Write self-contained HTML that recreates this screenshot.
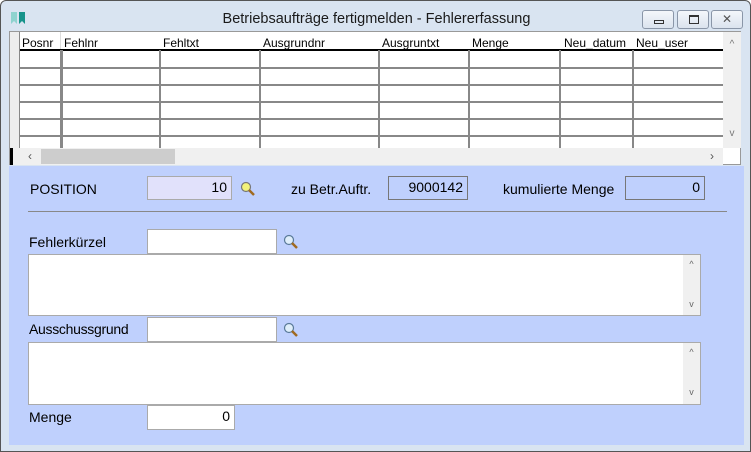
<!DOCTYPE html>
<html><head><meta charset="utf-8"><style>
*{margin:0;padding:0;box-sizing:border-box}
body{width:751px;height:452px;overflow:hidden;font-family:"Liberation Sans",Arial,sans-serif;font-size:13px;color:#000;background:#fff}
.win{position:absolute;left:0;top:0;width:751px;height:452px;background:#d9e4f1;border:1px solid #555;border-radius:6px 6px 0 0}
.abs{position:absolute}
.title{left:0;width:751px;top:10px;text-align:center;font-size:14.5px;color:#1a1a1a}
.btn{top:9px;height:19px;border:1px solid #8a96a8;border-radius:3px;background:linear-gradient(#f4f7fb,#dbe3ee)}
.grid{left:8px;top:30px;width:732px;height:134px;background:#fff;border:1px solid #999}
.hd{font-size:12px;top:4px}
.vl{width:2px;background:#888;top:18px;height:109px}
.hl{height:2px;background:#888;left:10px;width:703px}
.form{left:8px;top:165px;width:735px;height:279px;background:#bfd0fd}
.lbl{font-size:14px}
.inp{background:#fff;border:1px solid #aaa;text-align:right;font-size:14px;padding-right:4px;line-height:21px}
.ta{background:#fff;border:1px solid #aaa}
.sb{position:absolute;right:0;top:0;bottom:0;width:17px;background:#f0f0f0;font-size:9px;color:#666;text-align:center}
</style></head><body>
<div class="win">
<svg class="abs" style="left:10px;top:11px" width="16" height="14"><path d="M0 0h6v12l-3-3-3 3z" fill="#8fd3cf"/><path d="M8 0h6v12l-3-3-3 3z" fill="#17938b"/></svg>
<div class="abs title">Betriebsaufträge fertigmelden - Fehlererfassung</div>
<div class="abs btn" style="left:641px;width:32px"><div class="abs" style="left:11px;top:9px;width:10px;height:4px;border:1px solid #333"></div></div>
<div class="abs btn" style="left:676px;width:32px"><div class="abs" style="left:11px;top:4px;width:10px;height:9px;border:1px solid #333;border-top-width:2px"></div></div>
<div class="abs btn" style="left:710px;width:32px;color:#555;text-align:center;font-size:12px;line-height:17px">✕</div>
<div class="abs grid">
 <div class="abs" style="left:0;top:0;width:10px;height:116px;background:#eee;border-right:1px solid #888"></div>
 <div class="abs" style="left:0;top:116px;width:3px;height:17px;background:#000"></div>
 <div class="abs" style="left:10px;top:17px;width:703px;height:2px;background:#000"></div>
 <div class="abs hd" style="left:12px">Posnr</div><div class="abs hd" style="left:54px">Fehlnr</div><div class="abs hd" style="left:153px">Fehltxt</div><div class="abs hd" style="left:253px">Ausgrundnr</div><div class="abs hd" style="left:372px">Ausgruntxt</div><div class="abs hd" style="left:462px">Menge</div><div class="abs hd" style="left:554px">Neu_datum</div><div class="abs hd" style="left:626px">Neu_user</div>
 <div class="abs" style="left:50px;top:0;width:1px;height:17px;background:#ddd"></div>
 <div class="abs vl" style="left:50px;width:3px"></div><div class="abs vl" style="left:149px"></div><div class="abs vl" style="left:249px"></div><div class="abs vl" style="left:368px"></div><div class="abs vl" style="left:458px"></div><div class="abs vl" style="left:549px"></div><div class="abs vl" style="left:622px"></div>
 <div class="abs hl" style="top:35px"></div><div class="abs hl" style="top:52px"></div><div class="abs hl" style="top:69px"></div><div class="abs hl" style="top:86px"></div><div class="abs hl" style="top:103px"></div>
 <div class="abs" style="left:713px;top:0;width:18px;height:116px;background:#f0f0f0;color:#777;font-size:10px;text-align:center"><div style="margin-top:7px">^</div><div style="margin-top:78px">v</div></div>
 <div class="abs" style="left:3px;top:116px;width:710px;height:17px;background:#f0f0f0;color:#555;font-size:12px"><span class="abs" style="left:15px;top:1px">‹</span><div class="abs" style="left:28px;top:1px;width:134px;height:15px;background:#cdcdcd"></div><span class="abs" style="left:697px;top:1px">›</span></div>
</div>
<div class="abs form">
 <div class="abs lbl" style="left:21px;top:15px">POSITION</div>
 <div class="abs inp" style="left:138px;top:10px;width:85px;height:24px;background:#e1e1fb">10</div>
 <svg class="abs" style="left:231px;top:15px" width="16" height="16"><circle cx="6" cy="6" r="4.5" fill="#f2f27a" stroke="#777" stroke-width="1.2"/><path d="M9 9l5 5" stroke="#a06a20" stroke-width="2.5"/></svg>
 <div class="abs lbl" style="left:282px;top:15px">zu Betr.Auftr.</div>
 <div class="abs inp" style="left:379px;top:10px;width:80px;height:24px;background:transparent;border-color:#777">9000142</div>
 <div class="abs lbl" style="left:494px;top:15px">kumulierte Menge</div>
 <div class="abs inp" style="left:616px;top:10px;width:80px;height:24px;background:transparent;border-color:#777">0</div>
 <div class="abs" style="left:19px;top:45px;width:699px;height:1px;background:#888"></div>
 <div class="abs lbl" style="left:20px;top:68px">Fehlerkürzel</div>
 <div class="abs inp" style="left:138px;top:63px;width:130px;height:25px"></div>
 <svg class="abs" style="left:274px;top:68px" width="16" height="16"><circle cx="6" cy="6" r="4.5" fill="#dfeefa" stroke="#5a7a99" stroke-width="1.2"/><path d="M9 9l5 5" stroke="#a06a20" stroke-width="2.5"/></svg>
 <div class="abs ta" style="left:19px;top:88px;width:673px;height:62px"><div class="sb"><div style="margin-top:4px">^</div><div style="margin-top:30px">v</div></div></div>
 <div class="abs lbl" style="left:20px;top:155px;letter-spacing:-0.3px">Ausschussgrund</div>
 <div class="abs inp" style="left:138px;top:151px;width:130px;height:25px"></div>
 <svg class="abs" style="left:274px;top:156px" width="16" height="16"><circle cx="6" cy="6" r="4.5" fill="#dfeefa" stroke="#5a7a99" stroke-width="1.2"/><path d="M9 9l5 5" stroke="#a06a20" stroke-width="2.5"/></svg>
 <div class="abs ta" style="left:19px;top:176px;width:673px;height:63px"><div class="sb"><div style="margin-top:4px">^</div><div style="margin-top:30px">v</div></div></div>
 <div class="abs lbl" style="left:20px;top:243px">Menge</div>
 <div class="abs inp" style="left:138px;top:239px;width:88px;height:25px">0</div>
</div>
</div>
</body></html>
